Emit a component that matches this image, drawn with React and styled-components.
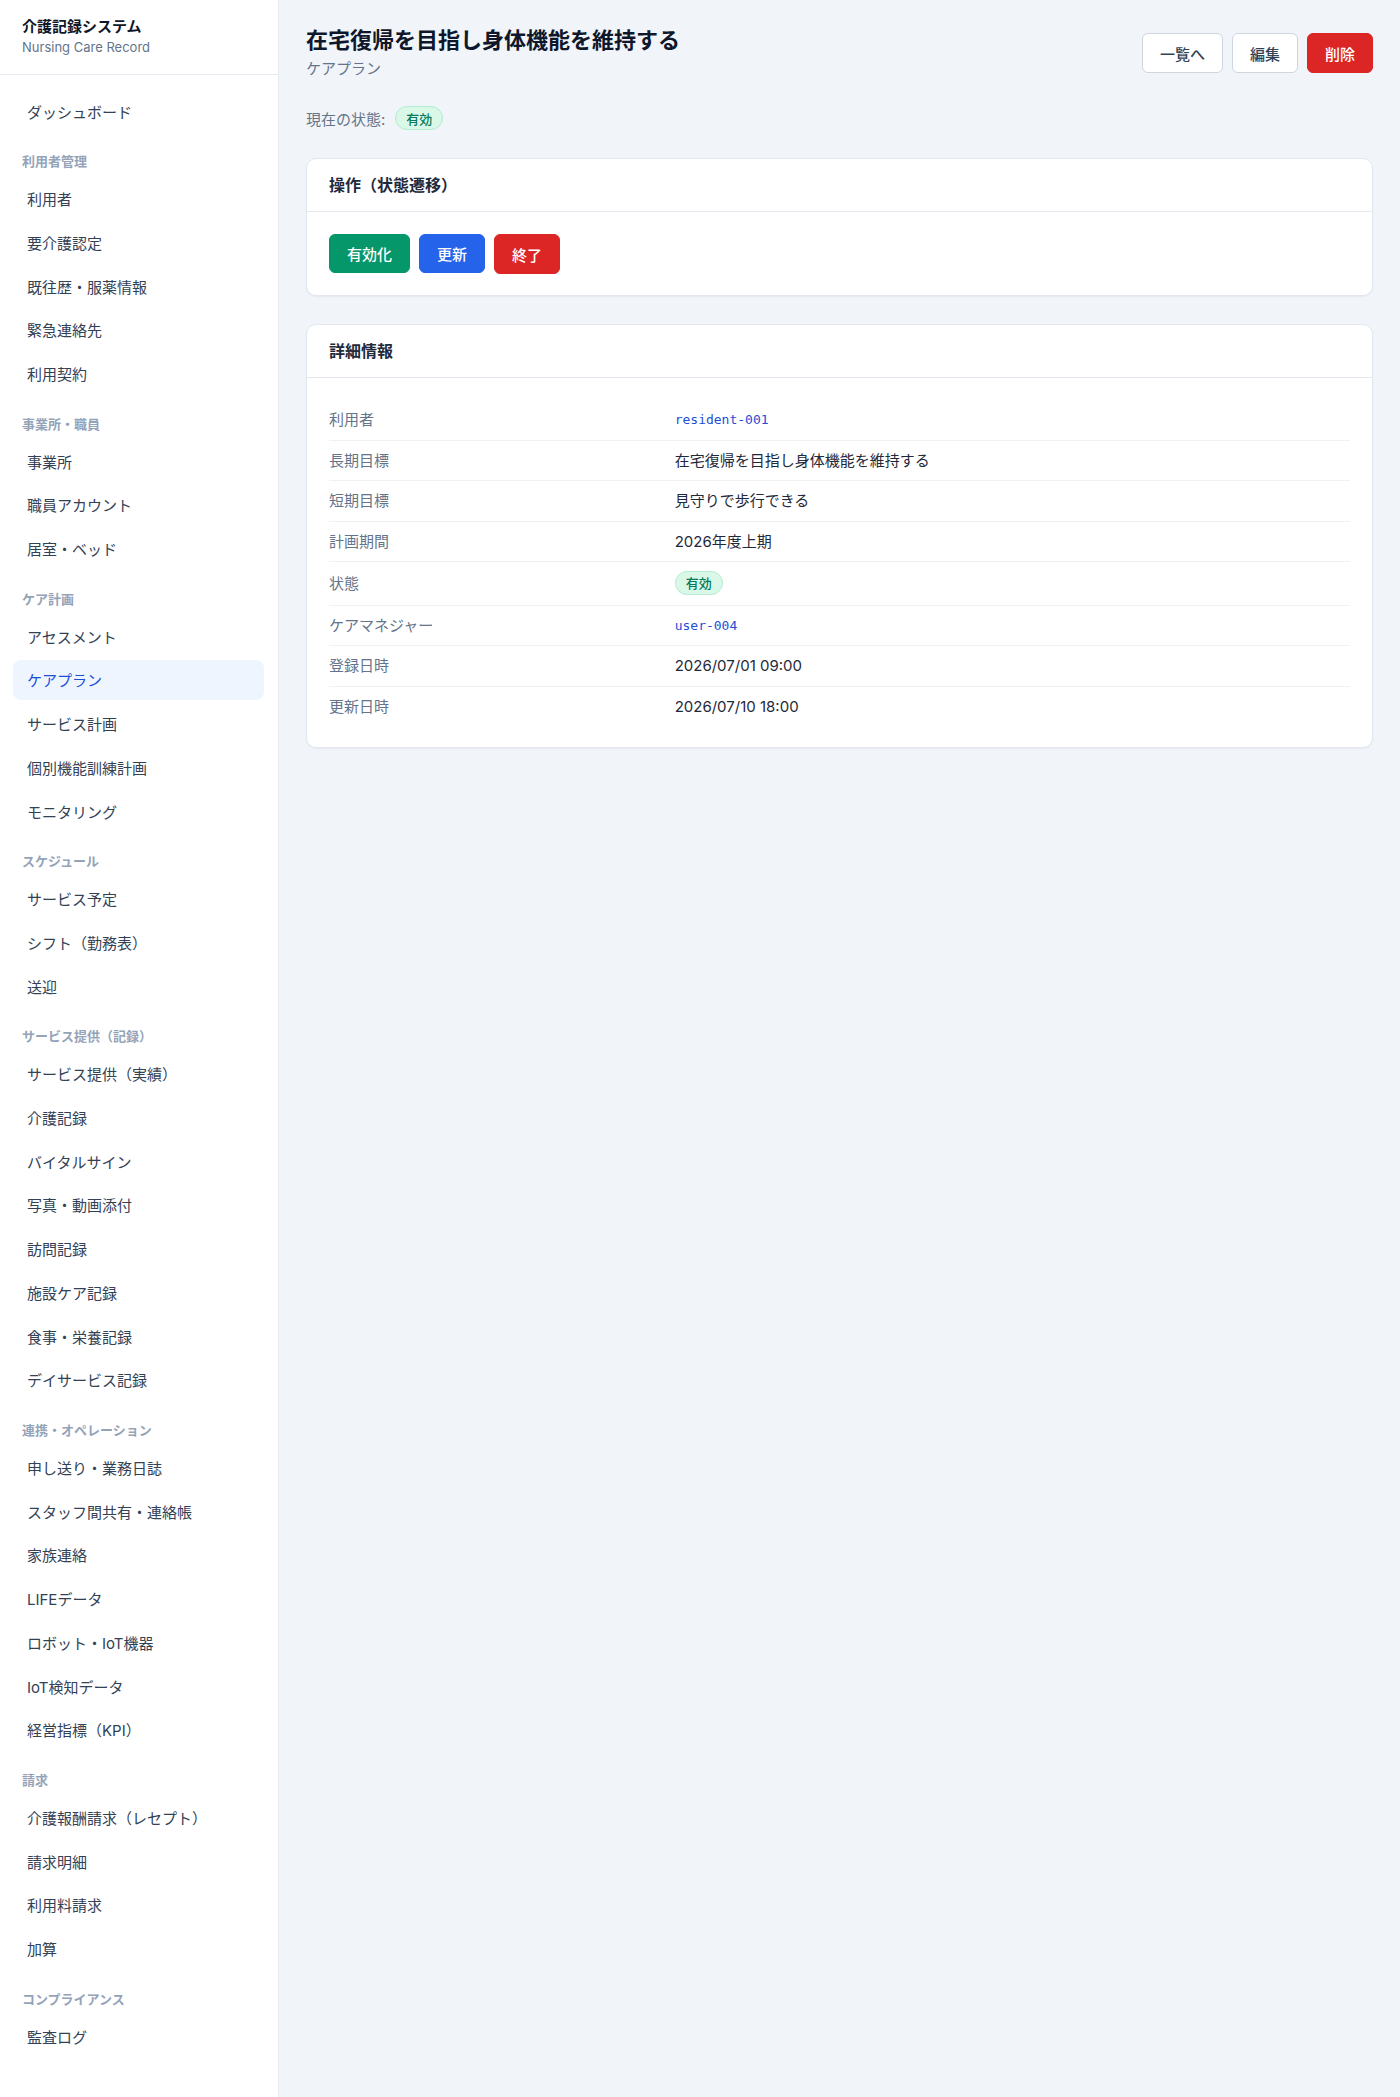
import styled, { createGlobalStyle } from "styled-components";

const GlobalStyle = createGlobalStyle`
  * {
    box-sizing: border-box;
  }
  body {
    margin: 0;
    background: #f1f4f9;
    font-family: Inter, "Noto Sans CJK JP", sans-serif;
    color: #1e293b;
  }
`;

const navSections = [
  { items: ["ダッシュボード"] },
  {
    label: "利用者管理",
    items: ["利用者", "要介護認定", "既往歴・服薬情報", "緊急連絡先", "利用契約"],
  },
  { label: "事業所・職員", items: ["事業所", "職員アカウント", "居室・ベッド"] },
  {
    label: "ケア計画",
    items: ["アセスメント", "ケアプラン", "サービス計画", "個別機能訓練計画", "モニタリング"],
  },
  { label: "スケジュール", items: ["サービス予定", "シフト（勤務表）", "送迎"] },
  {
    label: "サービス提供（記録）",
    items: [
      "サービス提供（実績）",
      "介護記録",
      "バイタルサイン",
      "写真・動画添付",
      "訪問記録",
      "施設ケア記録",
      "食事・栄養記録",
      "デイサービス記録",
    ],
  },
  {
    label: "連携・オペレーション",
    items: [
      "申し送り・業務日誌",
      "スタッフ間共有・連絡帳",
      "家族連絡",
      "LIFEデータ",
      "ロボット・IoT機器",
      "IoT検知データ",
      "経営指標（KPI）",
    ],
  },
  { label: "請求", items: ["介護報酬請求（レセプト）", "請求明細", "利用料請求", "加算"] },
  { label: "コンプライアンス", items: ["監査ログ"] },
];

const details = [
  { label: "利用者", value: "resident-001", kind: "code" },
  { label: "長期目標", value: "在宅復帰を目指し身体機能を維持する" },
  { label: "短期目標", value: "見守りで歩行できる" },
  { label: "計画期間", value: "2026年度上期" },
  { label: "状態", value: "有効", kind: "badge" },
  { label: "ケアマネジャー", value: "user-004", kind: "code" },
  { label: "登録日時", value: "2026/07/01 09:00" },
  { label: "更新日時", value: "2026/07/10 18:00" },
];

function App() {
  return (
    <>
      <GlobalStyle />
      <Layout>
        <Sidebar>
          <Brand>
            <BrandTitle>介護記録システム</BrandTitle>
            <BrandSub>Nursing Care Record</BrandSub>
          </Brand>
          <Nav>
            {navSections.map((section, i) => (
              <NavGroup key={i}>
                {section.label && <SectionLabel>{section.label}</SectionLabel>}
                {section.items.map((item) => (
                  <NavItem key={item} $active={item === "ケアプラン"}>
                    {item}
                  </NavItem>
                ))}
              </NavGroup>
            ))}
          </Nav>
        </Sidebar>

        <Main>
          <PageHeader>
            <div>
              <PageTitle>在宅復帰を目指し身体機能を維持する</PageTitle>
              <PageSub>ケアプラン</PageSub>
            </div>
            <HeaderActions>
              <Button $variant="outline">一覧へ</Button>
              <Button $variant="outline">編集</Button>
              <Button $variant="red">削除</Button>
            </HeaderActions>
          </PageHeader>

          <StatusLine>
            現在の状態:
            <Badge>有効</Badge>
          </StatusLine>

          <Card>
            <CardHeader>操作（状態遷移）</CardHeader>
            <CardBody>
              <ButtonRow>
                <Button $variant="green">有効化</Button>
                <Button $variant="blue">更新</Button>
                <Button $variant="red">終了</Button>
              </ButtonRow>
            </CardBody>
          </Card>

          <Card>
            <CardHeader>詳細情報</CardHeader>
            <CardBody>
              {details.map((row) => (
                <DetailRow key={row.label}>
                  <DetailLabel>{row.label}</DetailLabel>
                  <DetailValue>
                    {row.kind === "code" && <Code>{row.value}</Code>}
                    {row.kind === "badge" && <Badge>{row.value}</Badge>}
                    {!row.kind && row.value}
                  </DetailValue>
                </DetailRow>
              ))}
            </CardBody>
          </Card>
        </Main>
      </Layout>
    </>
  );
}

export default App;

const Layout = styled.div`
  display: flex;
  min-height: 100vh;
`;

const Sidebar = styled.aside`
  width: 279px;
  flex-shrink: 0;
  background: #ffffff;
  border-right: 1px solid #e5e9f0;
`;

const Brand = styled.div`
  padding: 17px 22px 18px;
  border-bottom: 1px solid #e5e9f0;
`;

const BrandTitle = styled.div`
  font-size: 15px;
  line-height: 20px;
  font-weight: 700;
  color: #0f172a;
`;

const BrandSub = styled.div`
  margin-top: 1px;
  font-size: 13px;
  line-height: 18px;
  color: #64748b;
`;

const Nav = styled.nav`
  display: flex;
  flex-direction: column;
  gap: 3.75px;
  padding: 16px 14px 40px 13px;
`;

const NavGroup = styled.div`
  display: flex;
  flex-direction: column;
  gap: 3.75px;
`;

const SectionLabel = styled.div`
  margin: 17.5px 0 3.5px 9px;
  font-size: 13px;
  line-height: 19px;
  font-weight: 700;
  color: #94a3b8;
`;

const NavItem = styled.div`
  height: 40px;
  display: flex;
  align-items: center;
  padding-left: 14px;
  border-radius: 8px;
  font-size: 15px;
  color: ${(p) => (p.$active ? "#1d4ed8" : "#334155")};
  background: ${(p) => (p.$active ? "#eef5ff" : "transparent")};
`;

const Main = styled.main`
  flex: 1;
  padding: 26px 27px 40px;
`;

const PageHeader = styled.div`
  display: flex;
  justify-content: space-between;
  align-items: center;
`;

const PageTitle = styled.h1`
  margin: 0;
  font-size: 22px;
  line-height: 28px;
  font-weight: 700;
  color: #0f172a;
`;

const PageSub = styled.div`
  margin-top: 4px;
  font-size: 15px;
  line-height: 22px;
  color: #64748b;
`;

const HeaderActions = styled.div`
  display: flex;
  gap: 9px;
`;

const variants = {
  outline: { bg: "#ffffff", color: "#334155", border: "#cfd6df" },
  red: { bg: "#dc2626", color: "#ffffff", border: "#dc2626" },
  green: { bg: "#059669", color: "#ffffff", border: "#059669" },
  blue: { bg: "#2563eb", color: "#ffffff", border: "#2563eb" },
};

const Button = styled.button`
  height: ${(p) => (p.$variant === "outline" || p.$variant === "red" ? "40px" : "39px")};
  padding: 0 17px;
  border-radius: 6px;
  border: 1px solid ${(p) => variants[p.$variant].border};
  background: ${(p) => variants[p.$variant].bg};
  color: ${(p) => variants[p.$variant].color};
  font-family: inherit;
  font-size: 15px;
  font-weight: 500;
  cursor: pointer;
`;

const StatusLine = styled.div`
  display: flex;
  align-items: center;
  gap: 10px;
  margin: 26px 0 28px;
  font-size: 15px;
  color: #64748b;
`;

const Badge = styled.span`
  display: inline-flex;
  align-items: center;
  height: 24px;
  padding: 0 10px;
  border-radius: 999px;
  background: #d9f8e8;
  border: 1px solid #b3ecd0;
  color: #047857;
  font-size: 13px;
  font-weight: 500;
`;

const Card = styled.section`
  background: #ffffff;
  border: 1px solid #e3e8ef;
  border-radius: 10px;
  box-shadow: 0 1px 2px rgba(15, 23, 42, 0.05);
  margin-bottom: 28px;
`;

const CardHeader = styled.h2`
  margin: 0;
  padding: 16px 22px;
  border-bottom: 1px solid #e3e8ef;
  font-size: 16px;
  line-height: 20px;
  font-weight: 700;
  color: #1e293b;
`;

const CardBody = styled.div`
  padding: 22px 22px 21px;
`;

const ButtonRow = styled.div`
  display: flex;
  gap: 9px;
`;

const DetailRow = styled.div`
  display: grid;
  grid-template-columns: 1fr 2fr;
  column-gap: 8px;
  align-items: center;
  padding: 9.25px 0;
  border-bottom: 1px solid #eef1f5;

  &:last-child {
    border-bottom: none;
  }
`;

const DetailLabel = styled.div`
  font-size: 15px;
  line-height: 21px;
  color: #64748b;
`;

const DetailValue = styled.div`
  display: flex;
  align-items: center;
  font-size: 15px;
  line-height: 21px;
  color: #1e293b;
`;

const Code = styled.code`
  font-family: "DejaVu Sans Mono", "Liberation Mono", monospace;
  font-size: 13px;
  color: #1d4ed8;
`;
